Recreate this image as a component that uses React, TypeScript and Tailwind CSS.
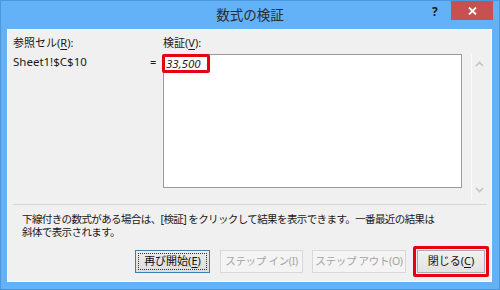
import React from 'react';

const FONT = { fontFamily: '"Noto Sans", "Noto Sans CJK JP", sans-serif' };

const Chevron: React.FC<{ down?: boolean }> = ({ down }) => (
  <svg width="9" height="6" viewBox="0 0 9 6" className="block">
    <path
      d={down ? 'M1 1 L4.5 4.5 L8 1' : 'M1 5 L4.5 1.5 L8 5'}
      fill="none"
      stroke="#c4c4c4"
      strokeWidth="1.6"
    />
  </svg>
);

interface DialogButtonProps {
  label: React.ReactNode;
  width: string;
  variant?: 'default' | 'focused' | 'disabled';
}

const DialogButton: React.FC<DialogButtonProps> = ({ label, width, variant = 'default' }) => {
  if (variant === 'disabled') {
    return (
      <div
        className={`${width} h-[23px] flex items-center justify-center whitespace-nowrap border border-[#d9d9d9] bg-[#f4f4f4] text-[#a3a3a3] text-[10.5px] tracking-[-0.3px]`}
      >
        {label}
      </div>
    );
  }

  if (variant === 'focused') {
    return (
      <div
        className={`${width} h-[23px] p-[2px] border border-[#3c7fb1] bg-gradient-to-b from-[#ececec] to-[#dcdcdc]`}
      >
        <div className="h-full flex items-center justify-center whitespace-nowrap border border-dotted border-[#333] text-[#111] text-[11px]">
          {label}
        </div>
      </div>
    );
  }

  return (
    <div
      className={`${width} h-[23px] flex items-center justify-center whitespace-nowrap border border-[#acacac] bg-gradient-to-b from-[#f0f0f0] to-[#e3e3e3] text-[#111] text-[11px]`}
    >
      {label}
    </div>
  );
};

export default function App() {
  return (
    <div
      className="w-[500px] h-[290px] bg-[#63b1f6] flex flex-col shadow-[inset_0_0_0_1px_#4b97dc]"
      style={FONT}
    >
      {/* Title bar */}
      <div className="relative h-[29px] flex items-center justify-center">
        <span className="text-[13.5px] text-[#2b2b2b] mt-[1px]">数式の検証</span>
        <span className="absolute left-[432px] top-[3px] text-[12px] font-bold text-[#1a1a1a]">?</span>
        <div className="absolute left-[451px] top-[1px] w-[42px] h-[19px] bg-[#c75050] flex items-center justify-center">
          <svg width="9" height="8" viewBox="0 0 9 8">
            <path d="M1 0.5 L8 7.5 M8 0.5 L1 7.5" stroke="#fff" strokeWidth="1.8" />
          </svg>
        </div>
      </div>

      {/* Client area */}
      <div className="ml-[7px] w-[485px] h-[253px] border border-[#f9f9f9] bg-[#f0f0f0] flex flex-col text-[11px] text-[#1a1a1a]">
        <div className="flex pl-[5px] pt-[5px]">
          <div className="w-[137px]">
            <div className="leading-[16px]">
              参照セル(<span className="underline underline-offset-2">R</span>):
            </div>
            <div className="leading-[16px] mt-[3px] text-[11.5px]">Sheet1!$C$10</div>
          </div>

          <div className="w-[13px] mt-[19px] leading-[16px]">=</div>

          <div className="flex flex-col">
            <div className="leading-[16px] mb-[3px]">
              検証(<span className="underline underline-offset-2">V</span>):
            </div>
            <div className="relative w-[299px] h-[134px] border border-[#9a9a9a] bg-white">
              <div className="pl-[2px] pt-[1px] leading-[16px] italic text-[11.5px] text-[#1a1a1a]">33,500</div>
              <div className="absolute left-[-2px] top-[-1px] w-[48px] h-[19px] border-[3px] border-[#e60012] rounded-[2px]" />
            </div>
          </div>

          <div className="ml-[9px] mt-[19px] w-[15px] h-[146px] border-l border-[#fafafa] flex flex-col items-center justify-between py-[7px]">
            <Chevron />
            <Chevron down />
          </div>
        </div>

        <div className="ml-[5px] mt-[4px] w-[474px] h-px bg-[#d6d6d6]" />

        <p className="ml-[14px] mt-[8px] leading-[13px] text-[10.5px] tracking-[-0.6px]">
          下線付きの数式がある場合は、[検証] をクリックして結果を表示できます。一番最近の結果は
          <br />
          斜体で表示されます。
        </p>

        <div className="flex items-center ml-[127px] mt-[11px]">
          <DialogButton
            width="w-[75px]"
            variant="focused"
            label={
              <>
                再び開始(<span className="underline underline-offset-2">E</span>)
              </>
            }
          />
          <div className="ml-[10px]">
            <DialogButton width="w-[83px]" variant="disabled" label="ステップ イン(I)" />
          </div>
          <div className="ml-[9px]">
            <DialogButton width="w-[94px]" variant="disabled" label="ステップ アウト(O)" />
          </div>
          <div className="relative ml-[11px]">
            <DialogButton
              width="w-[68px]"
              label={
                <>
                  閉じる(<span className="underline underline-offset-2">C</span>)
                </>
              }
            />
            <div className="absolute left-[-4px] top-[-4px] w-[76px] h-[31px] border-[3px] border-[#e60012] rounded-[2px]" />
          </div>
        </div>
      </div>
    </div>
  );
}
